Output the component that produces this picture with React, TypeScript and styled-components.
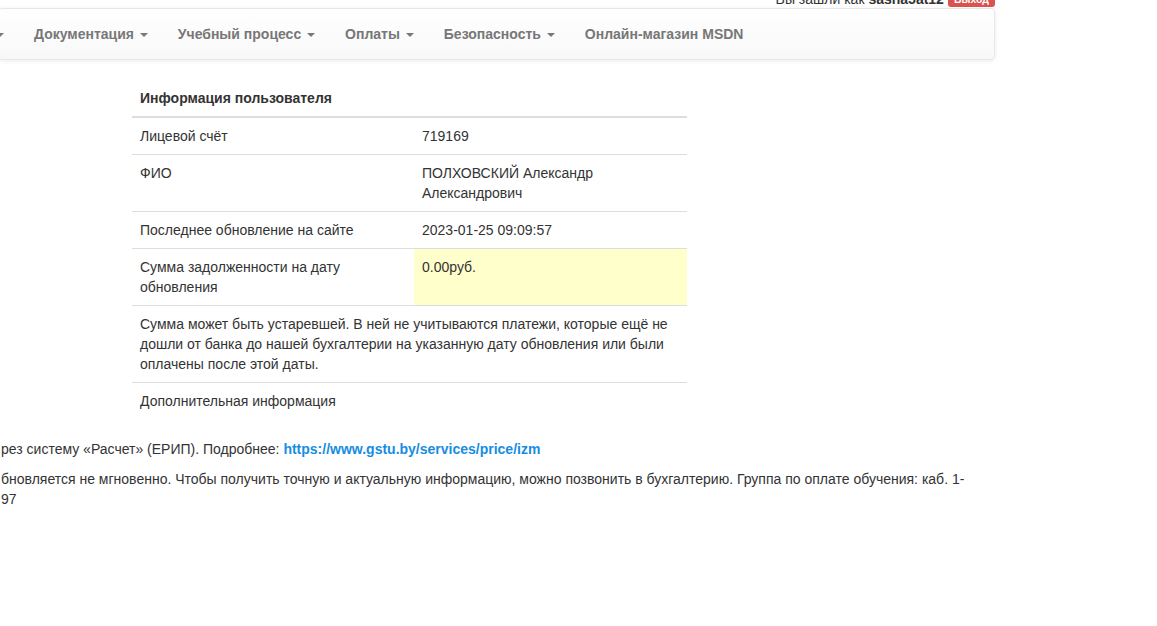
import React from "react";
import styled, { createGlobalStyle } from "styled-components";

const GlobalStyle = createGlobalStyle`
  html, body {
    margin: 0;
    padding: 0;
    background: #fff;
  }
  body {
    font-family: "Liberation Sans", Arial, Helvetica, sans-serif;
    font-size: 14px;
    line-height: 20px;
    color: #333;
    overflow: hidden;
  }
  * { box-sizing: border-box; }
`;

const Page = styled.div`
  width: 1157px;
  height: 626px;
  overflow: hidden;
`;

const TopBar = styled.div`
  height: 8px;
  overflow: hidden;
  display: flex;
  justify-content: flex-end;
  align-items: flex-end;
  padding-right: 162px;
  white-space: nowrap;
`;

const UserText = styled.span`
  line-height: 20px;
  margin-bottom: -1px;
  color: #333;
  b { font-weight: bold; }
`;

const LogoutLabel = styled.span`
  display: inline-block;
  margin-left: 4px;
  margin-bottom: 1px;
  padding: 2px 6px 3px;
  font-size: 10.5px;
  line-height: 1;
  font-weight: bold;
  color: #fff;
  background: #d9534f;
  border-radius: 3px;
`;

const Navbar = styled.nav`
  width: 997px;
  margin-left: -2px;
  min-height: 52px;
  margin-bottom: 20px;
  display: flex;
  background-image: linear-gradient(to bottom, #fff 0, #f8f8f8 100%);
  border: 1px solid #e7e7e7;
  border-radius: 4px;
  box-shadow: inset 0 1px 0 rgba(255, 255, 255, 0.15), 0 1px 5px rgba(0, 0, 0, 0.075);
`;

const NavList = styled.ul`
  list-style: none;
  margin: 0 0 0 -3px;
  padding: 0;
  display: flex;
  align-items: stretch;
`;

const NavLink = styled.a<{ $clipped?: boolean }>`
  display: block;
  padding: ${(p) => (p.$clipped ? "15px 15px 15px 0" : "15px")};
  line-height: 20px;
  color: #777;
  font-weight: bold;
  text-decoration: none;
  white-space: nowrap;
  text-shadow: 0 1px 0 rgba(255, 255, 255, 0.25);
`;

const Caret = styled.span<{ $bare?: boolean }>`
  display: inline-block;
  width: 0;
  height: 0;
  margin-left: ${(p) => (p.$bare ? "0" : "2px")};
  vertical-align: middle;
  border-top: 4px solid #777;
  border-right: 4px solid transparent;
  border-left: 4px solid transparent;
`;

const Content = styled.main`
  display: flex;
  flex-direction: column;
`;

const TableWrap = styled.div`
  margin-left: 132px;
  width: 555px;
  margin-bottom: 20px;
`;

const InfoTable = styled.table`
  width: 100%;
  border-collapse: collapse;
  border-spacing: 0;
  table-layout: fixed;
`;

const HeadCell = styled.th`
  padding: 8px;
  text-align: left;
  vertical-align: bottom;
  font-weight: bold;
  line-height: 20px;
  border-bottom: 2px solid #ddd;
`;

const Cell = styled.td<{ $highlight?: boolean }>`
  padding: 8px;
  vertical-align: top;
  line-height: 20px;
  border-top: 1px solid #ddd;
  background: ${(p) => (p.$highlight ? "#ffffcc" : "transparent")};
`;

const Note = styled.p`
  margin: 0 0 10px;
  padding-left: 1px;
  width: 968px;
  line-height: 20px;
`;

const Link = styled.a`
  color: #168de2;
  font-weight: bold;
  text-decoration: none;
`;

type Row = { label: string; value?: string; highlight?: boolean; full?: boolean };

const rows: Row[] = [
  { label: "Лицевой счёт", value: "719169" },
  { label: "ФИО", value: "ПОЛХОВСКИЙ Александр Александрович" },
  { label: "Последнее обновление на сайте", value: "2023-01-25 09:09:57" },
  { label: "Сумма задолженности на дату обновления", value: "0.00руб.", highlight: true },
  {
    label:
      "Сумма может быть устаревшей. В ней не учитываются платежи, которые ещё не дошли от банка до нашей бухгалтерии на указанную дату обновления или были оплачены после этой даты.",
    full: true,
  },
  { label: "Дополнительная информация", full: true },
];

const navItems = ["Документация", "Учебный процесс", "Оплаты", "Безопасность"];

export default function App() {
  return (
    <>
      <GlobalStyle />
      <Page>
        <TopBar>
          <UserText>
            Вы зашли как <b>sasha5at12</b>
          </UserText>
          <LogoutLabel>Выход</LogoutLabel>
        </TopBar>
        <Navbar>
          <NavList>
            <li>
              <NavLink $clipped href="#">
                <Caret $bare />
              </NavLink>
            </li>
            {navItems.map((item) => (
              <li key={item}>
                <NavLink href="#">
                  {item} <Caret />
                </NavLink>
              </li>
            ))}
            <li>
              <NavLink href="#">Онлайн-магазин MSDN</NavLink>
            </li>
          </NavList>
        </Navbar>
        <Content>
          <TableWrap>
            <InfoTable>
              <colgroup>
                <col style={{ width: "282px" }} />
                <col />
              </colgroup>
              <thead>
                <tr>
                  <HeadCell colSpan={2}>Информация пользователя</HeadCell>
                </tr>
              </thead>
              <tbody>
                {rows.map((r) =>
                  r.full ? (
                    <tr key={r.label}>
                      <Cell colSpan={2}>{r.label}</Cell>
                    </tr>
                  ) : (
                    <tr key={r.label}>
                      <Cell>{r.label}</Cell>
                      <Cell $highlight={r.highlight}>{r.value}</Cell>
                    </tr>
                  )
                )}
              </tbody>
            </InfoTable>
          </TableWrap>
          <Note>
            рез систему «Расчет» (ЕРИП). Подробнее:{" "}
            <Link href="#">https://www.gstu.by/services/price/izm</Link>
          </Note>
          <Note>
            бновляется не мгновенно. Чтобы получить точную и актуальную информацию, можно
            позвонить в бухгалтерию. Группа по оплате обучения: каб. 1-<wbr />97
          </Note>
        </Content>
      </Page>
    </>
  );
}
